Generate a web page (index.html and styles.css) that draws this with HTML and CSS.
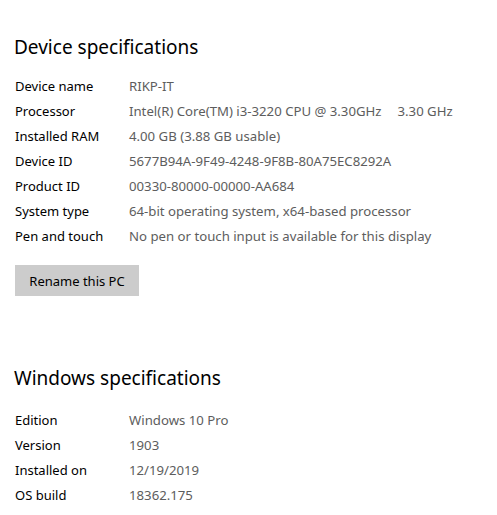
FILE: index.html
```html
<!DOCTYPE html>
<html lang="en">
<head>
  <meta charset="UTF-8" />
  <meta name="viewport" content="width=device-width, initial-scale=1.0"/>
  <title>About</title>
  <link rel="stylesheet" href="styles.css">
</head>
<body>
  <div class="page">
    <section class="specs">
      <h2>Device specifications</h2>
      <dl class="spec-list">
        <div class="row"><dt>Device name</dt><dd>RIKP-IT</dd></div>
        <div class="row"><dt>Processor</dt><dd>Intel(R) Core(TM) i3-3220 CPU @ 3.30GHz<span class="speed">3.30 GHz</span></dd></div>
        <div class="row"><dt>Installed RAM</dt><dd>4.00 GB (3.88 GB usable)</dd></div>
        <div class="row"><dt>Device ID</dt><dd>5677B94A-9F49-4248-9F8B-80A75EC8292A</dd></div>
        <div class="row"><dt>Product ID</dt><dd>00330-80000-00000-AA684</dd></div>
        <div class="row"><dt>System type</dt><dd>64-bit operating system, x64-based processor</dd></div>
        <div class="row"><dt>Pen and touch</dt><dd>No pen or touch input is available for this display</dd></div>
      </dl>
      <button class="rename">Rename this PC</button>
    </section>

    <section class="specs windows">
      <h2>Windows specifications</h2>
      <dl class="spec-list">
        <div class="row"><dt>Edition</dt><dd>Windows 10 Pro</dd></div>
        <div class="row"><dt>Version</dt><dd>1903</dd></div>
        <div class="row"><dt>Installed on</dt><dd>12/19/2019</dd></div>
        <div class="row"><dt>OS build</dt><dd>18362.175</dd></div>
      </dl>
    </section>
  </div>
</body>
</html>
```
FILE: styles.css
```css
body {
  font-family: 'Noto Sans', 'Open Sans', sans-serif;
  background: #ffffff;
  color: #000000;
  margin: 0;
}
.page {
  padding: 33px 15px 0 15px;
}
h2 {
  margin: 0 0 0 -1px;
  font-size: 19px;
  font-weight: 400;
  line-height: 28px;
}
.spec-list {
  margin: 13px 0 0 0;
  font-size: 13px;
}
.row {
  display: flex;
  line-height: 25px;
}
dt {
  width: 114px;
  flex-shrink: 0;
}
dd {
  margin: 0;
  color: #5d5d5d;
  font-size: 13.2px;
  white-space: nowrap;
}
.speed {
  margin-left: 16px;
}
.rename {
  margin-top: 16px;
  width: 124px;
  height: 31px;
  border: none;
  background: #cccccc;
  font-family: inherit;
  font-size: 13px;
  color: #000000;
  padding: 0;
}
.windows {
  margin-top: 68px;
}
.windows .spec-list {
  margin-top: 16px;
}
```
